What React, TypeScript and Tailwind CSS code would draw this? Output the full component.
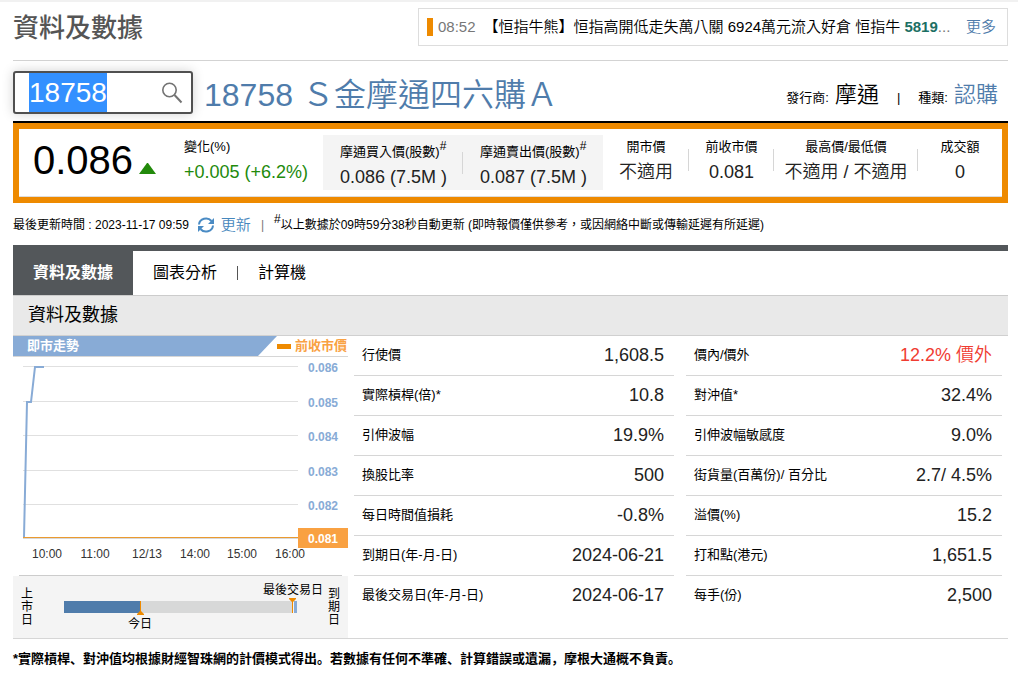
import React, { useEffect, useRef } from 'react';

const QUOTE_COLUMNS = [
  { label: '開市價', value: '不適用', basis: 'basis-[86px]' },
  { label: '前收市價', value: '0.081', basis: 'basis-[85px]' },
  { label: '最高價/最低價', value: '不適用 / 不適用', basis: 'basis-[144px]' },
  { label: '成交額', value: '0', basis: 'basis-[84px]' },
];

const LEFT_ROWS = [
  { label: '行使價', value: '1,608.5' },
  { label: '實際槓桿(倍)*', value: '10.8' },
  { label: '引伸波幅', value: '19.9%' },
  { label: '換股比率', value: '500' },
  { label: '每日時間值損耗', value: '-0.8%' },
  { label: '到期日(年-月-日)', value: '2024-06-21' },
  { label: '最後交易日(年-月-日)', value: '2024-06-17' },
];

const RIGHT_ROWS = [
  { label: '價內/價外', value: '12.2% 價外', alert: true },
  { label: '對沖值*', value: '32.4%' },
  { label: '引伸波幅敏感度', value: '9.0%' },
  { label: '街貨量(百萬份)/ 百分比', value: '2.7/ 4.5%' },
  { label: '溢價(%)', value: '15.2' },
  { label: '打和點(港元)', value: '1,651.5' },
  { label: '每手(份)', value: '2,500' },
];

const PRICE_TICKS = [
  { label: '0.086', y: 10 },
  { label: '0.085', y: 45 },
  { label: '0.084', y: 79 },
  { label: '0.083', y: 114 },
  { label: '0.082', y: 148 },
];

const TIME_TICKS = [
  { label: '10:00', x: 34 },
  { label: '11:00', x: 82 },
  { label: '12/13', x: 134 },
  { label: '14:00', x: 182 },
  { label: '15:00', x: 229 },
  { label: '16:00', x: 277 },
];

type Row = { label: string; value: string; alert?: boolean };

function DataTable({ rows }: { rows: Row[] }) {
  return (
    <table className="w-full border-separate border-spacing-0 self-start">
      <tbody>
        {rows.map((row, index) => {
          const line = index < rows.length - 1 ? 'border-b border-[#d6d6d6]' : '';
          return (
            <tr key={row.label}>
              <th scope="row" className={`h-10 pb-[2px] pl-2 text-left text-[13px] leading-5 font-normal text-black ${line}`}>
                {row.label}
              </th>
              <td className={`h-10 pr-[10px] pb-[2px] text-right text-lg leading-5 font-[350] ${line} ${row.alert ? 'text-[#f03c32]' : 'text-[#222]'}`}>
                {row.value}
              </td>
            </tr>
          );
        })}
      </tbody>
    </table>
  );
}

function IntradayChart() {
  return (
    <svg width="335" height="218" viewBox="0 0 335 218" className="block" role="img" aria-label="即市走勢">
      {PRICE_TICKS.map((tick) => (
        <g key={tick.label}>
          <rect x="10" y={tick.y - 1} width="275" height="1" fill="#e0e0e0" />
          <text x="310" y={tick.y + 5} textAnchor="middle" fontSize="12" fontWeight="bold" fill="#88abd6">
            {tick.label}
          </text>
        </g>
      ))}
      <path d="M11 180 L14 45 H18 L22 10 H31" fill="none" stroke="#88abd6" strokeWidth="2" />
      <rect x="10" y="180" width="275" height="1" fill="#ea9a30" />
      <rect x="10" y="181" width="275" height="1" fill="#d8d8d8" />
      <rect x="285" y="171" width="50" height="20" fill="#f9a142" />
      <text x="310" y="186" textAnchor="middle" fontSize="12" fontWeight="bold" fill="#fff">
        0.081
      </text>
      {TIME_TICKS.map((tick) => (
        <text key={tick.label} x={tick.x} y="201" textAnchor="middle" fontSize="12" fill="#333">
          {tick.label}
        </text>
      ))}
    </svg>
  );
}

function Lifetime() {
  return (
    <div className="flex h-[62px] items-center justify-between bg-[#f4f4f4] px-2 text-xs leading-[13px] text-black">
      <span className="w-3">上市日</span>
      <svg width="295" height="62" viewBox="0 0 295 62" className="block" role="img" aria-label="上市日至到期日">
        <rect x="31" y="25" width="76" height="12" fill="#4f7cab" />
        <rect x="107" y="25" width="153" height="12" fill="#d7d8d8" />
        <rect x="261" y="25" width="3" height="12" fill="#88abd6" />
        <path d="M107 25h1v10l3 3v1h-7v-1l3-3z" fill="#ee8a00" />
        <path d="M256 22h7v1l-3 3v11h-1V26l-3-3z" fill="#ee8a00" />
        <text x="107" y="52" textAnchor="middle" fontSize="12">今日</text>
        <text x="260" y="18" textAnchor="middle" fontSize="12">最後交易日</text>
      </svg>
      <span className="w-3">到期日</span>
    </div>
  );
}

export default function App() {
  const searchRef = useRef<HTMLInputElement>(null);

  useEffect(() => {
    searchRef.current?.focus();
    searchRef.current?.select();
  }, []);

  return (
    <div className="border-t-2 border-[#f1f1f1] bg-white pr-[10px] pb-1 pl-[13px] font-['Liberation_Sans','Noto_Sans_CJK_TC',sans-serif] text-black">
      {/* Title and news ticker */}
      <header className="flex items-start justify-between border-b border-[#d3d3d3] pt-[6px] pb-[14px]">
        <h1 className="h-[38px] text-[26px] leading-[40px] font-medium text-[#555]">資料及數據</h1>
        <div className="flex h-[38px] w-[590px] items-center border border-[#ddd] pr-[11px] pl-2 text-[15px] leading-5 font-[350]">
          <span className="h-[18px] w-[6px] bg-[#ee8a00]" />
          <time className="ml-[5px] text-[#777]">08:52</time>
          <a href="#news" className="ml-2 min-w-0 flex-1 truncate text-black">
            【恒指牛熊】恒指高開低走失萬八關 6924萬元流入好倉 恒指牛{' '}
            <b className="text-[#1d6f64]">5819</b>
            <span className="text-[#777]">...</span>
          </a>
          <a href="#more" className="ml-2 text-[#4f7cab]">更多</a>
        </div>
      </header>

      {/* Search and product name */}
      <div className="flex items-center border-b-2 border-black pt-[10px] pb-[7px]">
        <label className="flex h-[43px] w-[180px] items-center rounded-[3px] border-2 border-[#505050] pl-[14px] shadow-[0_0_12px_rgba(0,0,0,0.18)]">
          <input
            ref={searchRef}
            type="text"
            aria-label="編號"
            defaultValue="18758"
            className="h-[39px] w-[118px] text-[28px] leading-[39px] text-[#333] outline-none selection:bg-[#3390ff] selection:text-white"
          />
          <svg width="24" height="22" viewBox="0 0 24 22" fill="none" stroke="#737373" className="ml-3">
            <circle cx="10.500" cy="8" r="6.700" strokeWidth="1.600" />
            <path d="M15.500 13l7 7.500" strokeWidth="2" />
          </svg>
        </label>
        <h2 className="ml-[11px] h-[43px] text-[32px] leading-[48px] font-[350] text-[#4f7cab]">18758 Ｓ金摩通四六購Ａ</h2>
        <p className="ml-auto flex h-[43px] items-baseline pt-[2px] pr-[10px] text-[13px] leading-[43px]">
          發行商:<span className="ml-[6px] text-[22px] font-[350]">摩通</span>
          <span className="mx-[18px]">|</span>
          種類:<a href="#type" className="ml-[6px] text-[22px] font-[350] text-[#4f7cab]">認購</a>
        </p>
      </div>

      {/* Quote strip */}
      <section className="flex h-20 border-6 border-[#ee8a00] shadow-[inset_0_-1px_0_#ddd]">
        <div className="flex w-[165px] items-start pl-[14px]">
          <span className="pt-[10px] text-[40px] leading-[42px]">0.086</span>
          <svg width="17" height="11" viewBox="0 0 17 11" className="mt-[34px] ml-[6px]">
            <path d="M8 0h1l8 11H0z" fill="#228a0b" />
          </svg>
        </div>
        <dl className="w-[139px] pt-2">
          <dt className="text-[13px] leading-5">變化(%)</dt>
          <dd className="pt-[5px] text-lg leading-5 text-[#228a0b]">+0.005 (+6.2%)</dd>
        </dl>
        <div className="mt-[6px] flex h-[55px] w-[280px] items-center bg-[#f4f4f4]">
          <dl className="w-[140px] pt-[3px] pl-[17px] whitespace-nowrap">
            <dt className="text-[13px] leading-5">摩通買入價(股數)<sup className="text-xs">#</sup></dt>
            <dd className="pt-[5px] text-lg leading-5 text-[#222]">0.086 (7.5M )</dd>
          </dl>
          <span className="-ml-px h-[22px] w-px bg-[#d6d6d6]" />
          <dl className="w-[140px] pt-[3px] pl-[17px] whitespace-nowrap">
            <dt className="text-[13px] leading-5">摩通賣出價(股數)<sup className="text-xs">#</sup></dt>
            <dd className="pt-[5px] text-lg leading-5 text-[#222]">0.087 (7.5M )</dd>
          </dl>
        </div>
        <div className="flex h-[61px] flex-1 items-center">
          {QUOTE_COLUMNS.map((column, index) => (
            <React.Fragment key={column.label}>
              {index > 0 && <span className="-ml-px h-[22px] w-px bg-[#d6d6d6]" />}
              <dl className={`grow text-center whitespace-nowrap ${column.basis}`}>
                <dt className="text-[13px] leading-5">{column.label}</dt>
                <dd className="pt-[5px] text-lg leading-5 font-[350] text-[#222]">{column.value}</dd>
              </dl>
            </React.Fragment>
          ))}
        </div>
      </section>

      {/* Last update */}
      <div className="flex h-[42px] items-center pt-[2px] text-xs leading-5 whitespace-nowrap">
        <span>最後更新時間 : 2023-11-17 09:59</span>
        <button type="button" className="ml-2 flex items-center gap-[6px] text-[15px] leading-5 font-[350] text-[#4687bd]">
          <svg width="18" height="16" viewBox="0 0 18 16" fill="none" stroke="#4a8bc4" strokeWidth="2">
            <path d="M2 7.500a7 6.500 0 0 1 12.500-3.500" />
            <path d="M16 8.500a7 6.500 0 0 1-12.500 3.500" />
            <path d="M17 1v6h-6z" fill="#4a8bc4" stroke="none" />
            <path d="M1 15V9h6z" fill="#4a8bc4" stroke="none" />
          </svg>
          更新
        </button>
        <span className="mx-[10px] text-[#777]">|</span>
        <span>
          <sup className="text-xs">#</sup>以上數據於09時59分38秒自動更新 (即時報價僅供參考，或因網絡中斷或傳輸延遲有所延遲)
        </span>
      </div>

      {/* Tabs */}
      <nav className="flex h-[51px] items-stretch border-t-6 border-b border-t-[#53575a] border-b-[#ccc] text-base leading-5">
        <a href="#data" className="flex items-center bg-[#53575a] px-5 font-bold text-white">資料及數據</a>
        <a href="#chart" className="flex items-center px-5">圖表分析</a>
        <span className="mt-[15px] h-[14px] w-px bg-[#555]" />
        <a href="#calculator" className="flex items-center px-5">計算機</a>
      </nav>
      <h3 className="h-10 border-b border-[#d0d0d0] bg-[#e9e9e9] pl-[15px] text-lg leading-[38px]">資料及數據</h3>

      <main className="flex border-b border-[#d6d6d6]">
        <section className="w-[335px] shrink-0">
          <div className="flex h-[21px] items-center border-b border-[#d6d6d6] text-[13px] leading-5 font-bold">
            <h4 className="h-5 w-[264px] bg-[#88abd6] pl-[14px] text-white [clip-path:polygon(0_0,100%_0,245px_100%,0_100%)]">即市走勢</h4>
            <span className="h-[5px] w-[14px] bg-[#ee8a00]" />
            <span className="ml-1 text-[#f9a142]">前收市價</span>
          </div>
          <IntradayChart />
          <div className="mx-[6px] border-t border-[#ccc]" />
          <Lifetime />
        </section>
        <div className="grid flex-1 grid-cols-[320fr_316fr] gap-3 pr-[6px] pl-[6px]">
          <DataTable rows={LEFT_ROWS} />
          <DataTable rows={RIGHT_ROWS} />
        </div>
      </main>

      <p className="pt-[10px] font-['Liberation_Sans','Noto_Sans_CJK_SC',sans-serif] text-[13px] leading-5 font-bold" lang="zh-Hans">
        *實際槓桿、對沖值均根據財經智珠網的計價模式得出。若數據有任何不準確、計算錯誤或遺漏，摩根大通概不負責。
      </p>
    </div>
  );
}
